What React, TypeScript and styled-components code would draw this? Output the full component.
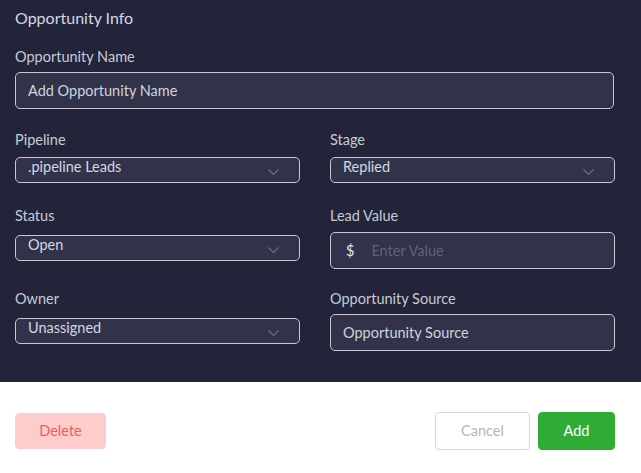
import React from "react";
import styled, { createGlobalStyle } from "styled-components";

const Global = createGlobalStyle`
  html, body { margin: 0; padding: 0; background: #ffffff; }
  body { font-family: "Lato", "Open Sans", sans-serif; }
  * { box-sizing: border-box; }
`;

const Page = styled.div`
  width: 641px;
  height: 473px;
  display: flex;
  flex-direction: column;
`;

const Panel = styled.section`
  background: #23243a;
  height: 382px;
  padding: 8px 27px 0 15px;
  display: flex;
  flex-direction: column;
`;

const Title = styled.h2`
  margin: 0;
  font-size: 16px;
  font-weight: 400;
  color: #d3d8e4;
  line-height: 20px;
`;

const Field = styled.div<{ $after?: number }>`
  display: flex;
  flex-direction: column;
  margin-bottom: ${(p) => p.$after ?? 0}px;
`;

const Label = styled.label<{ $gap: number }>`
  font-size: 14.5px;
  color: #c6cbd6;
  line-height: 18px;
  margin-bottom: ${(p) => p.$gap}px;
`;

const Grid = styled.div`
  display: grid;
  grid-template-columns: 285px 285px;
  column-gap: 30px;
  row-gap: 21px;
  margin-top: 22px;
  align-items: start;
`;

const TextBox = styled.div`
  height: 37px;
  border: 1px solid #c6c8d2;
  border-radius: 5px;
  background: #32334a;
  display: flex;
  align-items: center;
  padding: 0 12px;
  font-size: 14.5px;
  color: #cfd4de;
  gap: 17px;
`;

const Placeholder = styled.span`
  color: #5e6279;
`;

const Dollar = styled.span`
  color: #e2e6ee;
  padding-left: 3px;
`;

const Select = styled.div`
  height: 26px;
  border: 1px solid #c6c8d2;
  border-radius: 5px;
  background: #32334a;
  display: flex;
  align-items: flex-start;
  justify-content: space-between;
  padding: 0 20px 0 12px;
  font-size: 14.5px;
  color: #d3d8e2;
  line-height: 18px;
`;

const Chevron = styled.svg`
  margin-top: 11px;
  flex: none;
`;

const Footer = styled.footer`
  flex: 1;
  background: #ffffff;
  display: flex;
  align-items: center;
  padding: 6px 26px 0 15px;
  gap: 8px;
`;

type Kind = "danger" | "ghost" | "primary";

const palette: Record<Kind, { bg: string; border: string; fg: string; w: number; h: number }> = {
  danger: { bg: "#ffcccc", border: "#ffcccc", fg: "#f25b5d", w: 91, h: 36 },
  ghost: { bg: "#ffffff", border: "#d5d7df", fg: "#b5b6ba", w: 95, h: 38 },
  primary: { bg: "#2fac36", border: "#2fac36", fg: "#ffffff", w: 77, h: 38 },
};

const Button = styled.button<{ $kind: Kind }>`
  font-family: inherit;
  font-size: 14.5px;
  border-radius: 4px;
  cursor: pointer;
  border: 1px solid ${(p) => palette[p.$kind].border};
  background: ${(p) => palette[p.$kind].bg};
  color: ${(p) => palette[p.$kind].fg};
  width: ${(p) => palette[p.$kind].w}px;
  height: ${(p) => palette[p.$kind].h}px;
`;

const Spacer = styled.div`
  flex: 1;
`;

const ChevronIcon = () => (
  <Chevron width="11" height="6" viewBox="0 0 11 6">
    <path d="M0.5 0.5 L5.5 5.5 L10.5 0.5" fill="none" stroke="#6b7185" strokeWidth="1.1" />
  </Chevron>
);

const SelectField = ({
  label,
  value,
  gap,
  after,
}: {
  label: string;
  value: string;
  gap: number;
  after?: number;
}) => (
  <Field $after={after}>
    <Label $gap={gap}>{label}</Label>
    <Select>
      <span>{value}</span>
      <ChevronIcon />
    </Select>
  </Field>
);

const InputField = ({ label, gap, children }: { label: string; gap: number; children: React.ReactNode }) => (
  <Field>
    <Label $gap={gap}>{label}</Label>
    <TextBox>{children}</TextBox>
  </Field>
);

export default function App() {
  return (
    <Page>
      <Global />
      <Panel>
        <Title>Opportunity Info</Title>
        <Field style={{ marginTop: 20 }}>
          <Label $gap={6}>Opportunity Name</Label>
          <TextBox>Add Opportunity Name</TextBox>
        </Field>
        <Grid>
          <SelectField label="Pipeline" value=".pipeline Leads" gap={8} after={3} />
          <SelectField label="Stage" value="Replied" gap={8} after={3} />
          <SelectField label="Status" value="Open" gap={10} />
          <InputField label="Lead Value" gap={7}>
            <Dollar>$</Dollar>
            <Placeholder>Enter Value</Placeholder>
          </InputField>
          <SelectField label="Owner" value="Unassigned" gap={10} />
          <InputField label="Opportunity Source" gap={6}>
            Opportunity Source
          </InputField>
        </Grid>
      </Panel>
      <Footer>
        <Button $kind="danger">Delete</Button>
        <Spacer />
        <Button $kind="ghost">Cancel</Button>
        <Button $kind="primary">Add</Button>
      </Footer>
    </Page>
  );
}
